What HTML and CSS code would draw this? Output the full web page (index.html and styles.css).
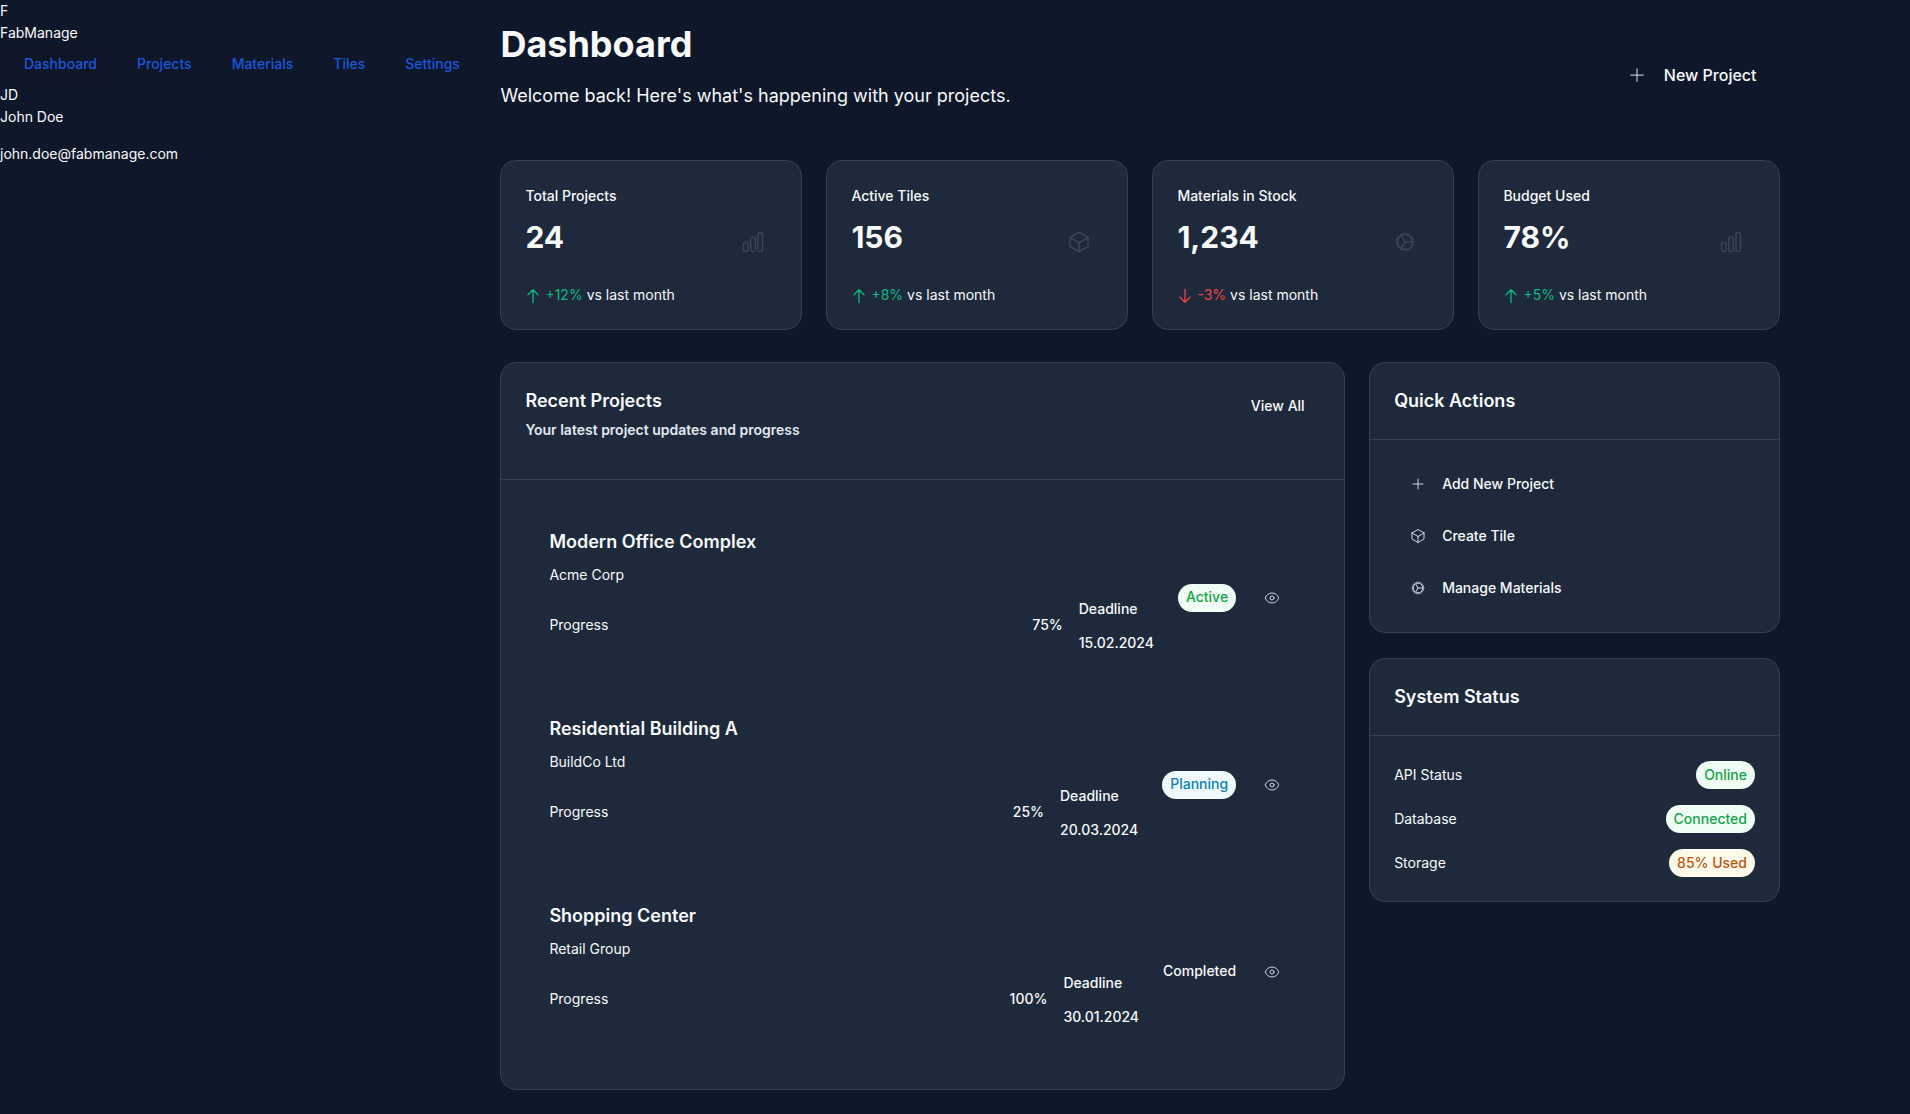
FILE: index.html
```html
<!DOCTYPE html>
<html lang="en">
<head>
    <meta charset="UTF-8">
    <meta name="viewport" content="width=device-width, initial-scale=1.0">
    <title>FabManage Dashboard</title>
    <link rel="stylesheet" href="styles.css">
</head>
<body>
    <svg class="icon-defs" width="0" height="0">
        <defs>
            <symbol id="i-plus" viewBox="0 0 24 24"><path d="M12 4.5v15m7.5-7.5h-15"/></symbol>
            <symbol id="i-bars" viewBox="0 0 24 24"><rect x="2.5" y="12.5" width="4.6" height="9" rx="1.6"/><rect x="9.7" y="7" width="4.6" height="14.5" rx="1.6"/><rect x="16.9" y="2.5" width="4.6" height="19" rx="1.6"/></symbol>
            <symbol id="i-box" viewBox="0 0 24 24"><path d="m21 7.5-9-5.25L3 7.5m18 0-9 5.25m9-5.25v9l-9 5.25M3 7.5l9 5.25M3 7.5v9l9 5.25m0-9v9"/></symbol>
            <symbol id="i-cog" viewBox="0 0 24 24"><path d="M4.5 12a7.5 7.5 0 0 0 15 0m-15 0a7.5 7.5 0 1 1 15 0m-15 0H3m16.5 0H21m-1.5 0H12m-8.457 3.077 1.41-.513m14.095-5.13 1.41-.513M5.106 17.785l1.15-.964m11.49-9.642 1.149-.964M7.501 19.795l.75-1.3m7.5-12.99.75-1.3m-6.063 16.658.26-1.477m2.605-14.772.26-1.477m0 17.726-.26-1.477M10.698 4.614l-.26-1.477M16.5 19.794l-.75-1.299M7.5 4.205 12 12m6.894 5.785-1.149-.964M6.256 7.178l-1.15-.964m15.352 8.864-1.41-.513M4.954 9.435l-1.41-.514M12.002 12l-3.75 6.495"/></symbol>
            <symbol id="i-up" viewBox="0 0 16 16"><path d="M8 14.5V1.7M8 1.7 3 6.7M8 1.7l5 5"/></symbol>
            <symbol id="i-down" viewBox="0 0 16 16"><path d="M8 1.5v12.8M8 14.3l-5-5M8 14.3l5-5"/></symbol>
            <symbol id="i-eye" viewBox="0 0 24 24"><path d="M2.036 12.322a1.012 1.012 0 0 1 0-.639C3.423 7.51 7.36 4.5 12 4.5c4.638 0 8.573 3.007 9.963 7.178.07.207.07.431 0 .639C20.577 16.49 16.64 19.5 12 19.5c-4.638 0-8.573-3.007-9.963-7.178Z"/><path d="M15 12a3 3 0 1 1-6 0 3 3 0 0 1 6 0Z"/></symbol>
        </defs>
    </svg>

    <div class="layout">
        <aside class="sidebar">
            <div>F</div>
            <div>FabManage</div>
            <nav class="nav">
                <a class="nav-link active" href="#">Dashboard</a>
                <a class="nav-link" href="#">Projects</a>
                <a class="nav-link" href="#">Materials</a>
                <a class="nav-link" href="#">Tiles</a>
                <a class="nav-link" href="#">Settings</a>
            </nav>
            <div>JD</div>
            <p class="user-name">John Doe</p>
            <p class="user-email">john.doe@fabmanage.com</p>
        </aside>

        <main class="main">
            <header class="page-header">
                <div>
                    <h1>Dashboard</h1>
                    <p class="welcome">Welcome back! Here's what's happening with your projects.</p>
                </div>
                <button class="new-project"><svg class="icon icon-20"><use href="#i-plus"/></svg>New Project</button>
            </header>

            <section class="stats">
                <div class="stat-card">
                    <p class="stat-label">Total Projects</p>
                    <div class="stat-row">
                        <p class="stat-value">24</p>
                        <span class="stat-icon"><svg class="icon icon-24"><use href="#i-bars"/></svg></span>
                    </div>
                    <p class="stat-change"><svg class="icon icon-16 up"><use href="#i-up"/></svg><span class="up">+12%</span> vs last month</p>
                </div>
                <div class="stat-card">
                    <p class="stat-label">Active Tiles</p>
                    <div class="stat-row">
                        <p class="stat-value">156</p>
                        <span class="stat-icon"><svg class="icon icon-24"><use href="#i-box"/></svg></span>
                    </div>
                    <p class="stat-change"><svg class="icon icon-16 up"><use href="#i-up"/></svg><span class="up">+8%</span> vs last month</p>
                </div>
                <div class="stat-card">
                    <p class="stat-label">Materials in Stock</p>
                    <div class="stat-row">
                        <p class="stat-value">1,234</p>
                        <span class="stat-icon"><svg class="icon icon-24"><use href="#i-cog"/></svg></span>
                    </div>
                    <p class="stat-change"><svg class="icon icon-16 down"><use href="#i-down"/></svg><span class="down">-3%</span> vs last month</p>
                </div>
                <div class="stat-card">
                    <p class="stat-label">Budget Used</p>
                    <div class="stat-row">
                        <p class="stat-value">78%</p>
                        <span class="stat-icon"><svg class="icon icon-24"><use href="#i-bars"/></svg></span>
                    </div>
                    <p class="stat-change"><svg class="icon icon-16 up"><use href="#i-up"/></svg><span class="up">+5%</span> vs last month</p>
                </div>
            </section>

            <section class="content">
                <div class="card projects-card">
                    <div class="card-header projects-header">
                        <div>
                            <h2>Recent Projects</h2>
                            <p class="card-sub">Your latest project updates and progress</p>
                        </div>
                        <button class="view-all">View All</button>
                    </div>
                    <div class="projects-list">
                        <div class="project">
                            <div class="project-info">
                                <h3>Modern Office Complex</h3>
                                <p class="client">Acme Corp</p>
                                <div class="project-meta">
                                    <div class="progress"><span>Progress</span><span>75%</span></div>
                                    <div class="deadline"><p>Deadline</p><p>15.02.2024</p></div>
                                </div>
                            </div>
                            <span class="badge green">Active</span>
                            <button class="eye"><svg class="icon icon-16"><use href="#i-eye"/></svg></button>
                        </div>
                        <div class="project">
                            <div class="project-info">
                                <h3>Residential Building A</h3>
                                <p class="client">BuildCo Ltd</p>
                                <div class="project-meta">
                                    <div class="progress"><span>Progress</span><span>25%</span></div>
                                    <div class="deadline"><p>Deadline</p><p>20.03.2024</p></div>
                                </div>
                            </div>
                            <span class="badge blue">Planning</span>
                            <button class="eye"><svg class="icon icon-16"><use href="#i-eye"/></svg></button>
                        </div>
                        <div class="project">
                            <div class="project-info">
                                <h3>Shopping Center</h3>
                                <p class="client">Retail Group</p>
                                <div class="project-meta">
                                    <div class="progress"><span>Progress</span><span>100%</span></div>
                                    <div class="deadline"><p>Deadline</p><p>30.01.2024</p></div>
                                </div>
                            </div>
                            <span class="badge plain">Completed</span>
                            <button class="eye"><svg class="icon icon-16"><use href="#i-eye"/></svg></button>
                        </div>
                    </div>
                </div>

                <div class="side-column">
                    <div class="card">
                        <div class="card-header"><h2>Quick Actions</h2></div>
                        <div class="actions">
                            <a class="action" href="#"><svg class="icon icon-16"><use href="#i-plus"/></svg>Add New Project</a>
                            <a class="action" href="#"><svg class="icon icon-16"><use href="#i-box"/></svg>Create Tile</a>
                            <a class="action" href="#"><svg class="icon icon-16"><use href="#i-cog"/></svg>Manage Materials</a>
                        </div>
                    </div>
                    <div class="card">
                        <div class="card-header"><h2>System Status</h2></div>
                        <div class="status-list">
                            <div class="status-row"><span>API Status</span><span class="badge green">Online</span></div>
                            <div class="status-row"><span>Database</span><span class="badge green">Connected</span></div>
                            <div class="status-row"><span>Storage</span><span class="badge amber">85% Used</span></div>
                        </div>
                    </div>
                </div>
            </section>
        </main>
    </div>
</body>
</html>
```

FILE: styles.css
```css
* {
    box-sizing: border-box;
}

body {
    margin: 0;
    background-color: #0f172a;
    color: #f8fafc;
    font-family: Inter, "Noto Sans", sans-serif;
    font-size: 14px;
    line-height: 22.4px;
    height: 1114px;
    overflow: hidden;
}

p, h1, h2, h3 {
    margin: 0;
}

button {
    background: none;
    border: none;
    color: inherit;
    font-family: inherit;
    padding: 0;
}

.icon-defs {
    position: absolute;
}

.icon {
    fill: none;
    stroke: currentColor;
    stroke-width: 1.5;
    stroke-linecap: round;
    stroke-linejoin: round;
    flex-shrink: 0;
}

.icon-16 { width: 16px; height: 16px; }
.icon-20 { width: 20px; height: 20px; }
.icon-24 { width: 24px; height: 24px; }

.layout {
    display: flex;
}

/* sidebar */
.sidebar {
    width: 476.4px;
    flex-shrink: 0;
}

.nav {
    display: flex;
    height: 39px;
    padding-left: 4px;
}

.nav-link {
    display: flex;
    align-items: center;
    padding: 0 20px;
    color: #1a56db;
    font-weight: 500;
    text-decoration: none;
}

.nav-link.active {
    background-color: #0e1628;
}

.user-email {
    margin-top: 14px;
}

/* main */
.main {
    width: 1303.6px;
    padding-left: 24px;
}

.page-header {
    display: flex;
    justify-content: space-between;
    align-items: flex-start;
    height: 138px;
    padding-top: 22px;
}

h1 {
    font-size: 36px;
    line-height: 44px;
    font-weight: 700;
    margin-bottom: 16px;
}

.welcome {
    font-size: 18px;
    line-height: 28px;
}

.new-project {
    display: flex;
    align-items: center;
    gap: 17px;
    height: 40px;
    margin-top: 33px;
    padding-right: 23.5px;
    font-size: 16px;
    font-weight: 500;
    color: #f8fafc;
}

.new-project .icon {
    color: #b6bdc8;
}

.stats {
    display: grid;
    grid-template-columns: repeat(4, 302px);
    gap: 24px;
    margin-top: 22px;
}

.stat-card {
    height: 170px;
    padding: 24px;
    background-color: #1e293b;
    border: 1px solid #334155;
    border-radius: 16px;
}

.stat-label {
    font-weight: 500;
}

.stat-row {
    display: flex;
    justify-content: space-between;
    margin-top: 8px;
    height: 48px;
}

.stat-value {
    font-size: 30px;
    line-height: 40px;
    font-weight: 700;
    margin-top: 2px;
}

.stat-icon {
    display: flex;
    align-items: center;
    justify-content: center;
    width: 48px;
    height: 48px;
    margin-top: 3px;
    color: #394558;
}

.stat-change {
    display: flex;
    align-items: center;
    margin-top: 21px;
}

.stat-change .icon {
    margin-right: 4px;
    stroke-width: 1.3;
}

.stat-change span {
    margin-right: 4px;
}

.up { color: #10b981; }
.down { color: #ef4444; }

.content {
    display: flex;
    align-items: flex-start;
    gap: 24px;
    margin-top: 32px;
}

.card {
    background-color: #1e293b;
    border: 1px solid #334155;
    border-radius: 16px;
}

.projects-card {
    width: 845px;
    height: 728px;
}

.side-column {
    display: flex;
    flex-direction: column;
    gap: 25px;
    width: 411px;
}

.card-header {
    padding: 24px;
    height: 77px;
    border-bottom: 1px solid #334155;
}

h2 {
    font-size: 18px;
    line-height: 28px;
    font-weight: 600;
}

.projects-header {
    display: flex;
    justify-content: space-between;
    height: 117px;
}

.card-sub {
    font-weight: 600;
    color: #e2e8f0;
    margin-top: 4px;
}

.view-all {
    align-self: flex-start;
    height: 36px;
    padding: 0 15.5px 0 16px;
    font-size: 14px;
    font-weight: 500;
    color: #f8fafc;
}

.projects-list {
    padding: 24px;
}

.project {
    display: flex;
    align-items: center;
    gap: 12px;
    height: 187px;
    padding: 24px;
}

.project-info {
    flex: 1;
    height: 139px;
}

h3 {
    font-size: 18px;
    line-height: 29px;
    font-weight: 600;
    margin-top: -1px;
}

.client {
    margin-top: 8px;
}

.project-meta {
    display: flex;
    align-items: center;
    gap: 16px;
    margin-top: 12px;
}

.progress {
    flex: 1;
    display: flex;
    justify-content: space-between;
    margin-bottom: 2px;
}

.progress span:last-child {
    font-weight: 500;
}

.deadline {
    font-weight: 500;
    margin-right: 12px;
}

.deadline p:last-child {
    margin-top: 11px;
}

.badge {
    display: inline-flex;
    align-items: center;
    height: 28px;
    padding: 0 8px;
    border-radius: 14px;
    font-weight: 500;
}

.green { background-color: #f0fdf4; color: #16a34a; }
.blue { background-color: #f0f9ff; color: #0c7fb5; }
.amber { background-color: #fffbeb; color: #b9560f; }
.plain { padding: 0; color: #f8fafc; }

.eye {
    display: flex;
    align-items: center;
    justify-content: center;
    width: 48px;
    height: 32px;
    color: #cbd5e1;
}

.actions {
    padding: 18px 24px;
}

.action {
    display: flex;
    align-items: center;
    gap: 16px;
    height: 52px;
    padding-left: 16px;
    color: #f8fafc;
    font-weight: 500;
    text-decoration: none;
}

.action .icon {
    color: #cbd5e1;
}

.status-list {
    padding: 17px 24px 16px;
}

.status-row {
    display: flex;
    justify-content: space-between;
    align-items: center;
    height: 44px;
}
```
